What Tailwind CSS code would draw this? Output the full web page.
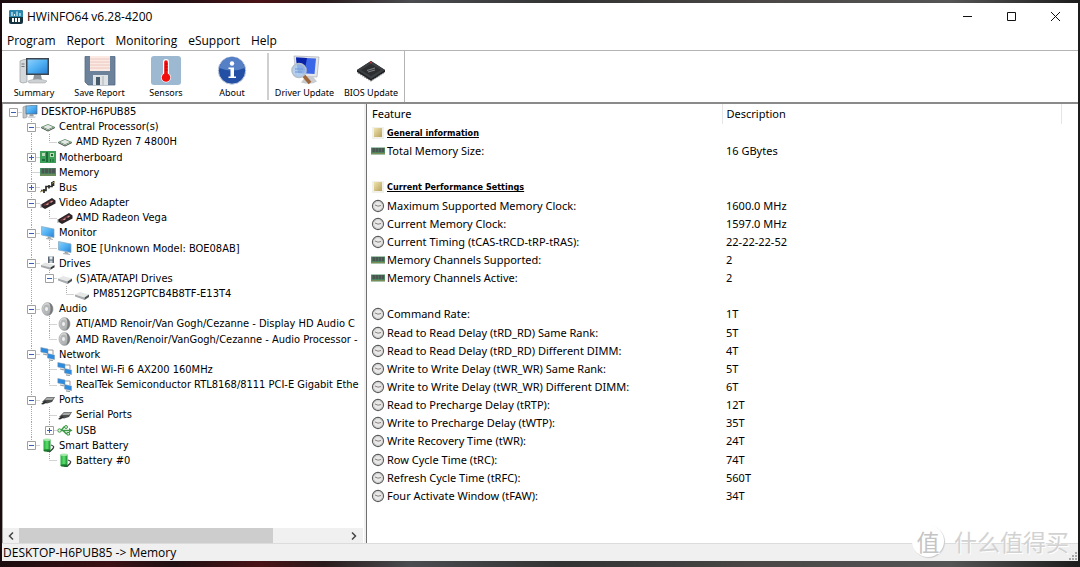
<!DOCTYPE html>
<html lang="en">
<head>
<meta charset="utf-8">
<title>HWiNFO64 v6.28-4200</title>
<script src="https://cdn.jsdelivr.net/npm/@tailwindcss/browser@4"></script>
</head>
<body class="h-screen overflow-hidden bg-[#1b1718] text-black">
<svg class="absolute size-0" aria-hidden="true">
  <defs>
    <linearGradient id="gScreen" x1="0" y1="0" x2="1" y2="1"><stop offset="0" stop-color="#8fd0fb"/><stop offset=".5" stop-color="#4fb0f3"/><stop offset="1" stop-color="#2a7fd4"/></linearGradient>
    <linearGradient id="gGreen" x1="0" x2="1"><stop offset="0" stop-color="#1fa838"/><stop offset=".5" stop-color="#5fe070"/><stop offset="1" stop-color="#168c2c"/></linearGradient>
    <linearGradient id="gMetal" x1="0" x2="1" y2="1"><stop offset="0" stop-color="#f4f4f4"/><stop offset="1" stop-color="#8d9193"/></linearGradient>
    <linearGradient id="gGold" x1="0" x2="1" y2="1"><stop offset="0" stop-color="#efe4b0"/><stop offset="1" stop-color="#b7a05c"/></linearGradient>
    <symbol id="pc" viewBox="0 0 16 14"><path d="M1 2l2-1h2v11l-2 1H1z" fill="#c3c7ca" stroke="#8a8f93" stroke-width=".6"/><path d="M4 1l11-1v9L4 9z" fill="url(#gScreen)" stroke="#5a6f80" stroke-width=".7"/><path d="M8 9h3l1 2.500H7z" fill="#9aa0a5"/><path d="M5 11.500h9l-1 1.500H6z" fill="#cfd3d6"/></symbol>
    <symbol id="cpu" viewBox="0 0 16 14"><path d="M1 7L8 10.500 15 7v1l-7 3.500L1 8z" fill="#3f4a42"/><path d="M1 7l7-3 7 3-7 3z" fill="#5f8a68"/><path d="M3 7l5-2.200L13 7 8 9.200z" fill="#e4e8e3"/></symbol>
    <symbol id="board" viewBox="0 0 16 14"><path d="M0 1h16v12H0z" fill="#3da058"/><path d="M2 3h3v3H2zM10 3h4v4h-4z" fill="#b9dcb6"/><path d="M6 2h2v10H6zM2 9h3v2H2zM10 9h1v3h-1zM12.500 9h1v3h-1z" fill="#1d6b36"/><path d="M11 4h2v2h-2z" fill="#1c6b35"/></symbol>
    <symbol id="ram" viewBox="0 0 16 14"><path d="M0 3h16v8H0z" fill="#4c9164"/><path d="M1.500 3.500h3v5h-3zM5 3.500h3v5H5zM8.500 3.500h3v5h-3zM12 3.500h3v5h-3z" fill="#4b5551"/><path d="M0 9.500h16v1H0z" fill="#8a8a50"/></symbol>
    <symbol id="bus" viewBox="0 0 16 14"><path d="M1 10.500h5V6.500h6V2M4 9v4M9 5v3.500M13.500 1v5" fill="none" stroke="#2c2c28" stroke-width="1.700"/><path d="M0 12l3-1.500M12 3.500l3-2" stroke="#9a8e50" stroke-width="1"/></symbol>
    <symbol id="gpu" viewBox="0 0 16 14"><path d="M1 8.500L12 2l3.500 2.500v3L5 13l-4-2.500z" fill="#2b2527"/><path d="M3 9l9-5.200 1.500 1L5 10z" fill="#73353a"/><path d="M6 8.500l2-1.200 1 .8-2 1.200zM10 6l2-1.200 1 .8-2 1.200z" fill="#d8a3a3"/><path d="M1 8v4" stroke="#999"/></symbol>
    <symbol id="mon" viewBox="0 0 16 14"><path d="M1.500.5L14 3v8.500L1.500 9z" fill="url(#gScreen)" stroke="#7fa6bf" stroke-width=".7"/><path d="M8 11l3 .5.500 1.300H7z" fill="#8a9095"/><path d="M6 12.600l7 .9" stroke="#b0b5b8"/></symbol>
    <symbol id="hdd" viewBox="0 0 16 14"><path d="M1 7.500L6 5l9 2.500-4.500 3z" fill="#e6e8e8"/><path d="M1 7.500l9.500 3v2.500L1 9.500z" fill="#a9adaf"/><path d="M10.500 10.500L15 7.500V10l-4.500 3z" fill="#4e5254"/></symbol>
    <symbol id="drives" viewBox="0 0 16 14"><path d="M1 9l4-2.500L14.500 9l-4 2.500z" fill="#e3e5e5"/><path d="M1 9l9.500 2.500v2.300L1 11z" fill="#a4a8aa"/><path d="M10.500 11.500L14.500 9v2.300l-4 2.500z" fill="#34383a"/><path d="M8 .5h6v6.500H8z" fill="#596673"/><path d="M9.500.5h3v3h-3z" fill="#e4eaf0"/><path d="M9.500 4.500h3V7h-3z" fill="#c7ccd0"/></symbol>
    <symbol id="spk" viewBox="0 0 16 14"><ellipse cx="7.500" cy="7" rx="5.500" ry="6.400" fill="url(#gMetal)" stroke="#8b8d8e" stroke-width=".6"/><path d="M9 .8c5 1 5 11 0 12.400 2-3 2-9.500 0-12.400z" fill="#77797b"/><ellipse cx="6.500" cy="7" rx="3.300" ry="4.500" fill="#b4b7b8"/><ellipse cx="6.500" cy="7" rx="1.500" ry="2" fill="#f0f0f0"/></symbol>
    <symbol id="net" viewBox="0 0 16 14"><path d="M8 3h5v4" fill="none" stroke="#999"/><path d="M.8.500L8 2v4.500L.8 5z" fill="#2e8ce0" stroke="#7c95a8" stroke-width=".5"/><path d="M3 7l4 .8M9 12.800l4 .8" stroke="#9aa0a4" stroke-width="1.200"/><path d="M7.500 6.500L14.500 8v4.500l-7-1.500z" fill="#2e8ce0" stroke="#7c95a8" stroke-width=".5"/></symbol>
    <symbol id="port" viewBox="0 0 16 14"><path d="M2 9l5-5h8l-3 5-5 1.500z" fill="#4d4f4e"/><path d="M7 4.500h7.500L12 7H5z" fill="#a6aaa8"/><path d="M1 11l4-3 2 1.500L3 11.500z" fill="#292b2a"/></symbol>
    <symbol id="usb" viewBox="0 0 16 14"><path d="M2 7.500h11M4 7.500l3-3.500h3M6 7.500l3 3h2" fill="none" stroke="#3c9a46" stroke-width="1.400"/><circle cx="2.500" cy="7.500" r="1.700" fill="#dff1df" stroke="#3c9a46"/><circle cx="9" cy="4" r="1.500" fill="#dff1df" stroke="#3c9a46"/><path d="M10 9.500h2.500V12H10z" fill="#dff1df" stroke="#3c9a46"/><path d="M12 5l3.500 2.500L12 9.500z" fill="#3c9a46"/></symbol>
    <symbol id="bat" viewBox="0 0 16 14"><path d="M11 7c3 1 3 2 2 3.500l-3 3-3-.5" fill="none" stroke="#3b3f3c" stroke-width="1.300"/><path d="M3.500 1.500h7v11h-7z" fill="url(#gGreen)"/><ellipse cx="7" cy="1.700" rx="3.500" ry="1.200" fill="#a5e9a9"/><ellipse cx="7" cy="12.500" rx="3.500" ry="1.200" fill="#167a2a"/></symbol>
    <symbol id="clock" viewBox="0 0 14 14"><circle cx="7" cy="7" r="5.600" fill="#e9e9e9" stroke="#5c5c5c" stroke-width="1.100"/><circle cx="7" cy="7" r="4.400" fill="none" stroke="#c4c4c4" stroke-width=".8"/><path d="M4 6l3 1.200L10 6.500" fill="none" stroke="#8c7f7c"/></symbol>
    <symbol id="gold" viewBox="0 0 14 14"><path d="M1 1h12v12H1z" fill="#f1f0ea"/><path d="M3 2h8v9H3z" fill="url(#gGold)"/></symbol>
  </defs>
</svg>
<div class="flex h-full flex-col bg-[linear-gradient(90deg,#1a0c0e_0%,#3c1014_10%,#1f1013_16%,#4a1216_24%,#2a1a1c_30%,#4a4c4f_38%,#333_52%,#4a4746_70%,#555_88%,#1c1c1c_100%)] px-[2px] pt-[3px] pb-[6px] font-['Noto_Sans',sans-serif] text-[11px]">
  <main class="relative flex min-h-0 flex-1 flex-col bg-white">
    <header class="flex h-[27px] shrink-0 items-center pl-[7px] font-['Open_Sans','Noto_Sans',sans-serif] text-[12px]">
      <svg class="mr-[4px] size-[14px]" viewBox="0 0 14 14"><rect width="14" height="14" rx="2" fill="#16323f"/><path d="M0 2q0-2 2-2h10q2 0 2 2v5H0z" fill="#2b86ad"/><path d="M3 2v4M5.500 4v2M8 1.500V6M11 3v3" stroke="#d4f0fa" stroke-width="1.200"/><path d="M3 8h2v4H3zM6 8h2v4H6zM9 8h2v4H9z" fill="#fff"/></svg>
      <h1>HWiNFO64 v6.28-4200</h1>
      <div class="ml-auto flex h-full">
        <button aria-label="Minimize" class="grid w-[44px] place-items-center"><svg class="size-[11px]" viewBox="0 0 11 11"><path d="M1 5.500h9" stroke="#111"/></svg></button>
        <button aria-label="Maximize" class="grid w-[44px] place-items-center"><svg class="size-[11px]" viewBox="0 0 11 11"><path d="M1.500 1.500h8v8h-8z" fill="none" stroke="#111"/></svg></button>
        <button aria-label="Close" class="grid w-[45px] place-items-center"><svg class="size-[11px]" viewBox="0 0 11 11"><path d="M1 1l9 9M10 1l-9 9" stroke="#111"/></svg></button>
      </div>
    </header>
    <nav class="flex h-[21px] shrink-0 items-center gap-[11px] border-b border-[#b4b4b4] pt-[2px] pl-[5px] font-['Open_Sans','Noto_Sans',sans-serif] text-[12px]">
      <button>Program</button><button>Report</button><button>Monitoring</button><button>eSupport</button><button>Help</button>
    </nav>
    <div role="toolbar" aria-label="Tools" class="flex h-[51px] shrink-0 text-[9px] leading-[12px]">
      <button class="flex w-[64px] flex-col items-center gap-[1px] pt-[4px]"><svg class="h-[31px] w-[32px]" viewBox="0 0 32 31"><path d="M2 6l4-1.500h3V27l-4 1-3-1z" fill="#d5d8da" stroke="#999ea2" stroke-width=".7"/><path d="M3.500 9h3M3.500 11.500h3" stroke="#777"/><path d="M8 3h23v17H8z" fill="#3b4650"/><path d="M9.500 4.500h20v14h-20z" fill="url(#gScreen)"/><path d="M16 20h7l1 5h-9z" fill="#8e959a"/><path d="M10 26q9-4 19 0l-2 2H11z" fill="#cdd1d4" stroke="#9a9fa3" stroke-width=".5"/></svg>Summary</button>
      <button class="flex w-[67px] flex-col items-center gap-[1px] pt-[4px]"><svg class="h-[31px] w-[32px]" viewBox="0 0 32 31"><path d="M1 1.500h30V30H4l-3-3z" fill="#6c829b" stroke="#566a80" stroke-width=".8"/><path d="M6 1h20v15H6z" fill="#fbeae4"/><path d="M6 4h20M6 7h20M6 10h20M6 13h20" stroke="#e7bfb3" stroke-width=".8"/><path d="M9 20h15v10H9z" fill="#dfe3e6"/><path d="M12 22h4v8h-4z" fill="#485969"/><path d="M19 21v9" stroke="#aab2b9"/></svg>Save Report</button>
      <button class="flex w-[66px] flex-col items-center gap-[1px] pt-[4px]"><svg class="h-[31px] w-[32px]" viewBox="0 0 32 31"><rect x="1" y="1" width="30" height="29" rx="3" fill="#9db9d1"/><path d="M13 7a3 3 0 016 0v11.500a5 5 0 11-6 0z" fill="#fff"/><circle cx="16" cy="22.500" r="4.300" fill="#f20d0d"/><path d="M14.200 7a1.800 1.800 0 013.600 0v15h-3.600z" fill="#f20d0d"/><path d="M15 9h3M15 12h3M15 15h3" stroke="#a00" stroke-width=".7"/></svg>Sensors</button>
      <button class="flex w-[66px] flex-col items-center gap-[1px] pt-[4px]"><svg class="h-[31px] w-[32px]" viewBox="0 0 32 31"><circle cx="16" cy="15.500" r="13.700" fill="#2350a4" stroke="#c3cde0" stroke-width="1"/><path d="M3.500 13a12.600 12.600 0 0125 0q-12 5-25 0z" fill="#5580c6"/><circle cx="16" cy="8.500" r="2.200" fill="#fff"/><path d="M12.500 12.500H18v9h2V23h-7.500v-1.500h2V14h-2z" fill="#fff"/></svg>About</button>
      <div class="my-[2px] mr-px ml-[2px] w-[2px] bg-[#cfcfcf]"></div>
      <button class="flex w-[69px] flex-col items-center gap-[1px] pt-[4px]"><svg class="h-[31px] w-[32px]" viewBox="0 0 32 31"><path d="M5 1l25 1-2 20-21-1z" fill="#e4e6e9" stroke="#a9aeb4" stroke-width=".7"/><path d="M7 2.500l20 1L25.500 19 9 18z" fill="#3c66e8"/><path d="M7 2.500l11 .6-3 15.300L9 18z" fill="#0a22a8"/><path d="M17 21l7 .5 4 5q-6 4-16 1z" fill="#c9cdd1"/><circle cx="10" cy="15.500" r="7" fill="#a9c9ee" fill-opacity=".85" stroke="#b6bfc9" stroke-width="1.600"/><path d="M6 14h8M6 17h7" stroke="#6f98d8"/><path d="M15 21l6 7" stroke="#a0663a" stroke-width="3.500"/></svg>Driver Update</button>
      <button class="flex w-[64px] flex-col items-center gap-[1px] pt-[4px]"><svg class="h-[31px] w-[32px]" viewBox="0 0 32 31"><path d="M2 15l14-9 14 9v2l-14 9-14-9z" fill="#1d1f21"/><path d="M2 15l14-9 14 9-14 9z" fill="#3c3f42"/><path d="M6 15l10-6 10 6-10 6z" fill="#2b2d2f"/><path d="M12 15.500l8-2.500M13 17l7-2" stroke="#7b7f83" stroke-width="1.200"/><path d="M3 18l13 8 13-8" fill="none" stroke="#8c8f91" stroke-width="1.200" stroke-dasharray="1.200 1.200"/><circle cx="16" cy="7.500" r=".9" fill="#c33"/></svg>BIOS Update</button>
      <div class="ml-px w-px bg-[#b4b4b4]"></div>
    </div>
    <div class="flex min-h-0 flex-1 border-t-2 border-[#8a8a8a]">
      <section aria-label="Devices" class="flex w-[362px] shrink-0 flex-col border-l border-[#a0a0a0] pr-px">
        <div class="min-h-0 flex-1 overflow-hidden pl-px">
          <ul id="tree" role="tree" class="grid h-[364px] auto-rows-fr font-['DejaVu_Sans_Condensed','Noto_Sans',sans-serif]"></ul>
        </div>
        <div class="flex h-[15px] shrink-0 bg-[#f0f0f0]">
          <button aria-label="Scroll left" class="grid w-[16px] place-items-center"><svg class="size-[8px]" viewBox="0 0 8 8"><path d="M6 .5L2.500 4 6 7.500" fill="none" stroke="#444" stroke-width="1.500"/></svg></button>
          <div class="flex-1"><div class="h-full w-[78%] bg-[#cdcdcd]"></div></div>
          <button aria-label="Scroll right" class="grid w-[18px] place-items-center"><svg class="size-[8px]" viewBox="0 0 8 8"><path d="M2 .5L5.500 4 2 7.500" fill="none" stroke="#444" stroke-width="1.500"/></svg></button>
        </div>
      </section>
      <div class="w-[2px] shrink-0 bg-[#f0f0f0]"></div>
      <section aria-label="Details" class="min-w-0 flex-1 border-l border-[#707070]">
        <table class="h-[401px] w-full table-fixed border-collapse text-left">
          <thead><tr class="h-[20px]"><th class="w-[355px] border-r border-[#e5e5e5] p-0 pl-[5px] font-normal">Feature</th><th class="border-r border-[#e5e5e5] p-0 pl-[4px] font-normal">Description</th><th class="w-[17px] p-0"></th></tr></thead>
          <tbody id="rows"></tbody>
        </table>
      </section>
    </div>
    <footer class="flex h-[18px] shrink-0 items-center justify-between border-t border-[#dcdcdc] bg-[#f0f0f0] pl-px font-['Open_Sans','Noto_Sans',sans-serif] text-[12px]">
      <span class="leading-[17px]">DESKTOP-H6PUB85 -&gt; Memory</span>
      <svg class="size-[10px] self-end" viewBox="0 0 10 10"><path d="M7 1h2v2H7zM4 4h2v2H4zM7 4h2v2H7zM1 7h2v2H1zM4 7h2v2H4zM7 7h2v2H7z" fill="#a8a8a8"/></svg>
    </footer>
    <div class="absolute right-[9px] bottom-[4px] flex items-center gap-[10px] font-['Noto_Sans_CJK_SC',sans-serif] text-[#d2d2d2] [text-shadow:1px_1px_0_#fff]">
      <span class="grid size-[32px] place-items-center rounded-full bg-white text-[23px] leading-[32px] text-[#c4c4c4] shadow-[1px_1px_1px_#ccc]">值</span>
      <span class="text-[23px] leading-[32px]">什么值得买</span>
    </div>
  </main>
</div>
<script>
// Guide codes: "." blank, "|" line, "T" tee, "L" elbow, "-"/"+" box; "="/"*" box ending its line, "^" top box.
const tree = [
  ["^","pc","DESKTOP-H6PUB85"],
  [".-","cpu","Central Processor(s)"],
  [".|L","cpu","AMD Ryzen 7 4800H"],
  [".+","board","Motherboard"],
  [".T","ram","Memory"],
  [".+","bus","Bus"],
  [".-","gpu","Video Adapter"],
  [".|L","gpu","AMD Radeon Vega"],
  [".-","mon","Monitor"],
  [".|L","mon","BOE [Unknown Model: BOE08AB]"],
  [".-","drives","Drives"],
  [".|=","hdd","(S)ATA/ATAPI Drives"],
  [".|.L","hdd","PM8512GPTCB4B8TF-E13T4"],
  [".-","spk","Audio"],
  [".|T","spk","ATI/AMD Renoir/Van Gogh/Cezanne - Display HD Audio C"],
  [".|L","spk","AMD Raven/Renoir/VanGogh/Cezanne - Audio Processor -"],
  [".-","net","Network"],
  [".|T","net","Intel Wi-Fi 6 AX200 160MHz"],
  [".|L","net","RealTek Semiconductor RTL8168/8111 PCI-E Gigabit Ethe"],
  [".-","port","Ports"],
  [".|T","port","Serial Ports"],
  [".|*","usb","USB"],
  [".=","bat","Smart Battery"],
  ["..L","bat","Battery #0"]
];
const up = "M9.500 0v8", full = "M9.500 0v16", across = "M9.500 8.500h9";
const line = { ".":"", "|":full, "T":full+across, "L":up+across, "-":full+across, "+":full+across, "=":up+across, "*":up+across, "^":across };
const guide = (c, i) => {
  const box = "-+=*^".includes(c) ? `<path d="M5.500 4.500h8v8h-8z" fill="#fff" stroke="#a0a0a0"/><path d="M7 8.500h5" stroke="#3a5fb0"/>` + ("+*".includes(c) ? `<path d="M9.500 6v5" stroke="#3a5fb0"/>` : "") : "";
  return `<svg class="${i % 4 < 2 ? "h-[16px] w-[18px] shrink-0" : "h-[16px] w-[17px] shrink-0"}" viewBox="0 0 18 16" preserveAspectRatio="xMinYMin slice"><path d="${line[c]}" fill="none" stroke="#a8a8a8" stroke-dasharray="1 1"/>${box}</svg>`;
};
document.getElementById("tree").innerHTML = tree.map(([g, icon, text]) =>
  `<li role="treeitem" class="flex min-h-0 items-center whitespace-nowrap leading-[15px]">${[...g].map(guide).join("")}<svg class="mr-[3px] h-[14px] w-[16px] shrink-0"><use href="#${icon}"/></svg><span>${text}</span></li>`).join("");
const rows = [
  ["gold","General information",null],
  ["ram","Total Memory Size:","16 GBytes"],
  null,
  ["gold","Current Performance Settings",null],
  ["clock","Maximum Supported Memory Clock:","1600.0 MHz"],
  ["clock","Current Memory Clock:","1597.0 MHz"],
  ["clock","Current Timing (tCAS-tRCD-tRP-tRAS):","22-22-22-52"],
  ["ram","Memory Channels Supported:","2"],
  ["ram","Memory Channels Active:","2"],
  null,
  ["clock","Command Rate:","1T"],
  ["clock","Read to Read Delay (tRD_RD) Same Rank:","5T"],
  ["clock","Read to Read Delay (tRD_RD) Different DIMM:","4T"],
  ["clock","Write to Write Delay (tWR_WR) Same Rank:","5T"],
  ["clock","Write to Write Delay (tWR_WR) Different DIMM:","6T"],
  ["clock","Read to Precharge Delay (tRTP):","12T"],
  ["clock","Write to Precharge Delay (tWTP):","35T"],
  ["clock","Write Recovery Time (tWR):","24T"],
  ["clock","Row Cycle Time (tRC):","74T"],
  ["clock","Refresh Cycle Time (tRFC):","560T"],
  ["clock","Four Activate Window (tFAW):","34T"]
];
document.getElementById("rows").innerHTML = rows.map(r => r
  ? `<tr class="h-[18px]"><td class="p-0 pl-[4px]"><div class="flex items-center gap-[2px] whitespace-nowrap leading-[18px]"><svg class="h-[14px] w-[14px] shrink-0"><use href="#${r[0]}"/></svg><span class="${r[2] === null ? "font-['DejaVu_Sans_Condensed'] text-[9px] font-bold underline" : ""}">${r[1]}</span></div></td><td class="p-0 pl-[4px] leading-[18px]">${r[2] ?? ""}</td><td></td></tr>`
  : `<tr class="h-[18px]"><td></td><td></td><td></td></tr>`).join("");
</script>
</body>
</html>
